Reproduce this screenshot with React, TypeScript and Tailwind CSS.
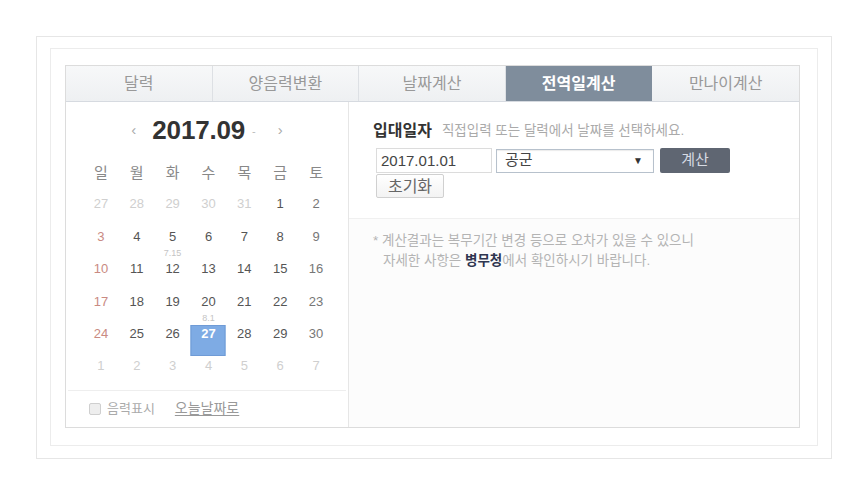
import { useState } from "react";

const tabs = ["달력", "양음력변환", "날짜계산", "전역일계산", "만나이계산"];
const weekdays = ["일", "월", "화", "수", "목", "금", "토"];

type Day = { d: number; other?: boolean; lunar?: string };

const weeks: Day[][] = [
  [{ d: 27, other: true }, { d: 28, other: true }, { d: 29, other: true }, { d: 30, other: true }, { d: 31, other: true }, { d: 1 }, { d: 2 }],
  [{ d: 3 }, { d: 4 }, { d: 5, lunar: "7.15" }, { d: 6 }, { d: 7 }, { d: 8 }, { d: 9 }],
  [{ d: 10 }, { d: 11 }, { d: 12 }, { d: 13 }, { d: 14 }, { d: 15 }, { d: 16 }],
  [{ d: 17 }, { d: 18 }, { d: 19 }, { d: 20, lunar: "8.1" }, { d: 21 }, { d: 22 }, { d: 23 }],
  [{ d: 24 }, { d: 25 }, { d: 26 }, { d: 27 }, { d: 28 }, { d: 29 }, { d: 30 }],
  [{ d: 1, other: true }, { d: 2, other: true }, { d: 3, other: true }, { d: 4, other: true }, { d: 5, other: true }, { d: 6, other: true }, { d: 7, other: true }],
];

function Calendar() {
  const [selected, setSelected] = useState(27);

  return (
    <div className="w-[283px] flex flex-col border-r border-[#e6e6e6]">
      <div className="h-[56px] flex items-center justify-center text-[#aaa]">
        <button className="text-[15px] mr-[16px] mt-[1px]">‹</button>
        <span className="text-[26px] font-bold text-[#333] tracking-[-0.2px]">2017.09</span>
        <span className="text-[11px] ml-[7px] mt-[2px] text-[#bbb]">-</span>
        <button className="text-[15px] ml-[22px] mt-[1px]">›</button>
      </div>

      <div className="pl-[17px] pr-[14px]">
        <div className="grid grid-cols-7 h-[30px] items-center text-center text-[15px] text-[#888]">
          {weekdays.map((w) => (
            <span key={w}>{w}</span>
          ))}
        </div>
        {weeks.map((week, wi) => (
          <div key={wi} className="grid grid-cols-7 h-[32.4px]">
            {week.map((day, di) => {
              const isSel = !day.other && day.d === selected;
              let color = "text-[#555]";
              if (day.other) color = "text-[#cfcfcf]";
              else if (di === 0) color = "text-[#c98a82]";
              else if (di === 6) color = "text-[#777]";
              return (
                <div
                  key={di}
                  className="relative flex items-center justify-center text-[13px] cursor-pointer"
                  onClick={() => !day.other && setSelected(day.d)}
                >
                  {isSel && (
                    <span className="absolute left-1/2 -translate-x-1/2 top-[7px] w-[35px] h-[31px] bg-[#7eabe4] border border-[#6f9bd6]" />
                  )}
                  <span className={`relative ${isSel ? "text-white font-bold" : color}`}>{day.d}</span>
                  {day.lunar && (
                    <span className="absolute bottom-0 translate-y-1/2 left-0 right-0 text-center text-[9px] leading-none text-[#c4c4c4]">
                      {day.lunar}
                    </span>
                  )}
                </div>
              );
            })}
          </div>
        ))}
      </div>

      <div className="mt-auto mx-[2px] mb-[1px] h-[36px] border-t border-[#eeeeee] flex items-center pl-[21px] text-[13px]">
        <span className="w-[12px] h-[12px] border border-[#cfcfcf] bg-[#eeeeee] rounded-[2px]" />
        <span className="ml-[6px] text-[#aaa]">음력표시</span>
        <a className="ml-[20px] text-[14px] text-[#999] underline underline-offset-2 cursor-pointer">오늘날짜로</a>
      </div>
    </div>
  );
}

function Discharge() {
  const [date, setDate] = useState("2017.01.01");

  return (
    <div className="flex-1 flex flex-col">
      <div className="pl-[24px] pt-[19px] pb-[19px] border-b border-[#f0f0f0] bg-white">
        <div className="h-[20px] flex items-center">
          <span className="text-[16px] font-bold text-[#333]">입대일자</span>
          <span className="ml-[10px] text-[13.5px] text-[#aaa]">직접입력 또는 달력에서 날짜를 선택하세요.</span>
        </div>
        <div className="mt-[7px] ml-[3px] flex items-center">
          <input
            value={date}
            onChange={(e) => setDate(e.target.value)}
            className="w-[116px] h-[25px] border border-[#dcdcdc] px-[4px] text-[15px] text-[#444] outline-none"
          />
          <div className="ml-[4px] w-[158px] h-[24px] border border-[#b7c1cc] shadow-[inset_0_1px_1px_rgba(0,0,0,0.08)] flex items-center justify-between pl-[8px] pr-[10px] text-[15px] text-[#444]">
            <span>공군</span>
            <span className="text-[10px] text-[#333]">▼</span>
          </div>
          <button className="ml-[6px] w-[70px] h-[25px] rounded-[2px] bg-[#5f6672] text-[15px] text-[#d6dbe4]">계산</button>
        </div>
        <button className="mt-[1px] ml-[3px] w-[68px] h-[24px] rounded-[2px] border border-[#d0d0d0] bg-gradient-to-b from-white to-[#f3f3f3] text-[16px] text-[#666]">
          초기화
        </button>
      </div>
      <div className="flex-1 bg-[#fcfcfc] pl-[24px] pt-[12px] text-[13.5px] leading-[20px] text-[#b4b4b4]">
        <p>* 계산결과는 복무기간 변경 등으로 오차가 있을 수 있으니</p>
        <p className="pl-[10px]">
          자세한 사항은 <b className="text-[#2f3550]">병무청</b>에서 확인하시기 바랍니다.
        </p>
      </div>
    </div>
  );
}

export default function App() {
  const [active, setActive] = useState(3);

  return (
    <div
      className="w-[867px] h-[495px] bg-white pt-[36px] pl-[36px]"
      style={{ fontFamily: '"Liberation Sans", "Noto Sans CJK KR", sans-serif' }}
    >
      <div className="w-[796px] h-[423px] border border-[#e6e6e6] pt-[11px] pl-[13px]">
        <div className="w-[768px] h-[398px] border border-[#ececec] pt-[16px] pl-[14px]">
          <div className="w-[735px] h-[363px] border border-[#dcdcdc] flex flex-col">
            <div className="grid grid-cols-5 h-[36px] border-b border-[#d6dae0]">
              {tabs.map((t, i) => (
                <button
                  key={t}
                  onClick={() => setActive(i)}
                  className={
                    i === active
                      ? "bg-[#7f8d9c] text-white font-bold text-[16px] border-r border-[#7f8d9c]"
                      : "bg-gradient-to-b from-[#f7f8f9] to-[#eef0f2] text-[#999] text-[16px] border-r border-[#dde0e4] last:border-r-0"
                  }
                >
                  {t}
                </button>
              ))}
            </div>
            <div className="flex flex-1">
              <Calendar />
              <Discharge />
            </div>
          </div>
        </div>
      </div>
    </div>
  );
}
